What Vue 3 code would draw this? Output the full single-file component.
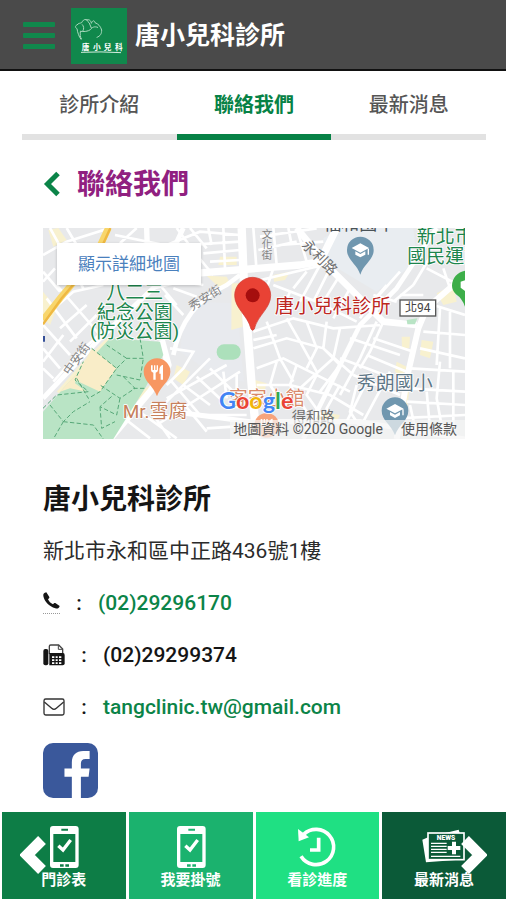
<script setup>
import { ref } from 'vue'

const tabs = ['診所介紹', '聯絡我們', '最新消息']
const activeTab = ref(1)

const shortcuts = [
  { label: '門診表', icon: 'phone', tone: 'tone-forest' },
  { label: '我要掛號', icon: 'phone', tone: 'tone-green' },
  { label: '看診進度', icon: 'clock', tone: 'tone-mint' },
  { label: '最新消息', icon: 'news', tone: 'tone-deep' },
]
</script>

<template>
  <div class="page">
    <header class="topbar">
      <button class="menu" type="button" aria-label="選單">
        <span></span><span></span><span></span>
      </button>
      <svg class="logo" viewBox="0 0 168 168" aria-hidden="true">
        <rect width="168" height="168" fill="#10884c" />
        <g fill="none" stroke="#a9d8bd" stroke-width="3" stroke-linecap="round" stroke-linejoin="round">
          <path d="M30 94C24 86 20 75 18 62C12 59 12 53 18 51C22 45 28 46 32 44C35 38 39 33 46 35C51 37 51 44 56 47" />
          <path d="M46 36C54 33 60 37 61 46C64 38 70 35 72 44C82 48 88 54 92 66C92 78 88 84 78 88" />
          <path d="M28 70C38 72 52 70 58 65C63 58 70 54 80 58M34 50C38 54 40 62 36 68M28 72C28 80 26 86 31 92M56 48L61 60" />
        </g>
        <path d="M30 133Q90 130 150 134" fill="none" stroke="#d5eddf" stroke-width="3" />
        <text x="32" y="125" class="logo-text">唐</text>
        <text x="66" y="125" class="logo-text">小</text>
        <text x="98" y="125" class="logo-text">兒</text>
        <text x="132" y="125" class="logo-text">科</text>
      </svg>
      <span class="brand">唐小兒科診所</span>
    </header>

    <nav class="tabs">
      <button
        v-for="(tab, i) in tabs"
        :key="tab"
        type="button"
        class="tab"
        :class="{ active: i === activeTab }"
        @click="activeTab = i"
      >{{ tab }}</button>
    </nav>

    <main class="content">
      <div class="title-row">
        <button class="back" type="button" aria-label="返回">
          <svg viewBox="0 0 17 26"><path d="M14.500 2.500L4 13L14.500 23.500" fill="none" stroke="#0b8448" stroke-width="5" /></svg>
        </button>
        <h1>聯絡我們</h1>
      </div>

      <div class="map">
        <svg class="map-art" viewBox="9 9 1266 633" role="img" aria-label="地圖">
          <rect x="9" y="9" width="1266" height="633" fill="#e8e9eb" />
          <!-- campus grounds -->
          <path d="M425 340Q440 235 505 232L590 235L612 470L530 455L420 380Z" fill="#e8eaee" />
          <path d="M850 40L900 9L1120 9L1130 110L1010 200L860 110Z" fill="#e9edf1" />
          <!-- commercial blocks -->
          <g fill="#f8f1cf">
            <path d="M575 175L608 175L608 305L574 315Z" />
            <path d="M540 95L590 95L590 120L535 120ZM700 150L750 140L735 165L702 170ZM500 152L560 155L572 180L535 185Z" />
            <path d="M1145 345L1180 350L1170 400L1140 390ZM1085 335L1110 335L1108 370L1086 370ZM1070 410L1100 425L1085 460L1065 440ZM1085 470L1110 480L1100 560L1085 545Z" />
            <path d="M9 200L50 250L30 300L9 280ZM410 420L450 440L430 480L400 460ZM300 500L345 470L290 560ZM645 465L680 475L670 510L648 500Z" />
            <path d="M840 560L900 570L880 610L830 590ZM1190 205L1240 180L1250 230L1210 240ZM25 15L55 9L80 45L40 65ZM50 500L120 420L200 340L230 360L80 520Z" />
          </g>
          <!-- minor streets -->
          <g fill="none" stroke="#fff" stroke-width="8">
            <path d="M30 9L130 190M80 9L110 60M9 90L80 50L210 9M240 55L290 9M225 30L420 70M9 170L45 130M50 180L180 330M20 220L110 340M9 300L90 390M9 370L60 430M9 430L40 460M30 260L100 200L190 180M60 310L140 240M90 350L170 270M120 380L200 310M9 410L70 330M40 470L120 380M9 140L60 200" />
            <path d="M410 9L470 90L520 150M450 9L500 70M380 60L480 20L600 30M440 60L600 50M490 85L600 75M510 110L600 105M505 9L515 60M550 9L555 130M360 180L410 240M400 190L470 215M375 210L430 270M340 190L420 170L490 180" />
            <path d="M640 9L650 140M660 35L830 10M655 75L770 50M700 9L710 120M745 9L755 60M770 9L800 110M720 60L850 50M640 170L850 120M680 190L700 130M760 190L800 140M840 120L780 230M900 150L850 230M930 190L880 280M700 180L830 230L950 290M750 200L720 270M870 130L820 230" />
            <path d="M640 320L760 280L880 310L1020 300M640 370L740 340L850 370L940 450M650 430L730 400L850 460L930 500M680 290L720 400L760 470M740 280L780 350L830 440M800 290L830 370L800 430M860 290L850 370L900 420M900 310L880 400L780 490M960 300L900 420L840 500M1010 290L960 400L900 510M650 480L750 480L870 510L970 570M710 410L690 480L730 540M770 420L750 480L800 560M830 450L800 510L850 580M900 480L860 550L880 620M950 480L930 560L970 620M640 345L710 330M930 340L1080 390M900 400L1060 460M1030 290L990 380L960 430" />
            <path d="M1000 210L1070 230M1040 180L980 250L960 280M1080 140L1000 230M1120 180L1060 230M1150 210L1080 210M1180 80L1120 180M1210 130L1230 190M1160 130L1275 190M1180 240L1275 270M1150 320L1275 330M1200 250L1190 420M1230 260L1230 430M1140 370L1275 400M1110 430L1275 440M1100 490L1275 500M1200 410L1190 520L1210 630M1240 440L1240 630M1070 580L1275 570M1100 530L1275 540M980 390L1100 440M940 450L1080 510M1000 340L1120 380M980 470L920 590M1050 440L970 590M1110 540L1130 630M1160 500L1170 610" />
            <path d="M390 370L460 380L430 430L380 480M350 560L510 400M380 520L560 420M350 600L600 440M430 480L510 540M470 455L550 530M510 430L590 510M395 470L480 570M340 570L390 640M430 535L500 620M480 570L620 570M500 610L650 600M550 440L560 520M590 450L590 550M240 570L330 640M270 540L410 640M220 620L260 560" />
          </g>
          <!-- main streets -->
          <g fill="none" stroke="#fff" stroke-linejoin="round">
            <path d="M605 9L612 180L635 480L650 642" stroke-width="25" />
            <path d="M340 155L530 140L780 120L840 110L890 9" stroke-width="22" />
            <path d="M770 9L870 130L1030 290L1130 300" stroke-width="20" />
            <path d="M1190 9L1070 190L960 300L790 642" stroke-width="14" />
            <path d="M1275 150L1160 250L1135 310L1105 440L1070 642" stroke-width="18" />
            <path d="M9 520L180 340L350 180L430 9" stroke-width="15" />
            <path d="M365 345L385 420L330 500L210 642" stroke-width="20" />
            <path d="M320 9L325 170" stroke-width="16" />
            <path d="M400 390Q430 240 560 180L600 150" stroke-width="14" />
            <path d="M400 560L630 590L960 590L1275 642" stroke-width="15" />
          </g>
          <path d="M205 9L165 95L60 220L9 285" fill="none" stroke="#f8d66c" stroke-width="20" />
          <path d="M211 9L172 95L65 220L9 298" fill="none" stroke="#efb842" stroke-width="7" />
          <!-- park -->
          <path d="M9 560L70 490L210 340L360 350L370 390L315 490L220 642L9 642Z" fill="#b9e4c5" />
          <path d="M155 370L230 430L180 500L105 465Z" fill="#f9edc8" />
          <path d="M60 500L115 440L105 475L140 500L90 490Z" fill="#f9edc8" />
          <g fill="none" stroke="#56a878" stroke-width="3" stroke-dasharray="13 7">
            <path d="M9 550L50 510L145 500L105 465L130 410M155 370L230 430L180 500L145 520L110 460M230 430L260 400L310 400L300 340M260 400L200 360M230 450L300 465L310 400M250 455L285 490L240 520L180 480M240 520L230 570L180 545L220 510M30 540L70 590L100 560L150 530M70 590L40 642M70 590L160 600L190 642M180 545L185 610L225 590M280 490L315 490" />
          </g>
          <rect x="530" y="358" width="72" height="46" rx="22" fill="#ace0bb" />
          <path d="M1100 285L1132 280L1125 298L1102 298Z" fill="#b9e4c5" />
          <path d="M9 333H15V350H9Z" fill="#344f98" />

          <!-- street and place names -->
          <g class="map-street">
            <text transform="translate(456 258) rotate(-32)">秀安街</text>
            <text transform="translate(88 452) rotate(-54)">中安街</text>
            <text x="678" y="10" class="vertical">文化街</text>
            <text transform="translate(783 62) rotate(45)" class="street-big">永利路</text>
            <text x="755" y="590" class="street-big">得和路</text>
            <text x="850" y="16" class="school-cut">福和國中</text>
          </g>
          <g class="map-place map-outline">
            <g fill="#1c854d">
              <text x="284" y="222" text-anchor="middle">八二三</text>
              <text x="284" y="281" text-anchor="middle">紀念公園</text>
              <text x="284" y="338" text-anchor="middle">(防災公園)</text>
              <text x="1130" y="54">新北市</text>
              <text x="1102" y="115">國民運動</text>
            </g>
            <text x="248" y="580" fill="#c6805c">Mr.雪腐</text>
            <text x="566" y="539" fill="#d98968">客家小館</text>
            <text x="950" y="495" fill="#5f7888">秀朗國小</text>
            <text x="704" y="263" class="clinic" fill="#bd271f">唐小兒科診所</text>
          </g>

          <!-- route badge -->
          <rect x="1080" y="225" width="107" height="48" fill="#fff" stroke="#555" stroke-width="4" />
          <text x="1133" y="262" class="route" text-anchor="middle">北94</text>

          <!-- school pins -->
          <g v-for="pin in [[961, 75], [1065, 557]]" :key="pin[0]" :transform="`translate(${pin[0]} ${pin[1]})`">
            <path d="M-40 0A40 40 0 1 1 40 0C40 30 10 42 0 74C-10 42 -40 30 -40 0Z" fill="#7097af" />
            <path d="M-26 -6L0 -20L26 -6L0 8ZM-15 4L0 12L15 4V14L0 22L-15 14ZM22 -4H26V14H22Z" fill="#fff" />
          </g>
          <!-- restaurant pins -->
          <g transform="translate(351 440)">
            <path d="M-40 0A40 40 0 1 1 40 0C40 30 10 42 0 74C-10 42 -40 30 -40 0Z" fill="#f79762" />
            <path d="M-18 -19V-5Q-18 2 -11 3V24H-4V3Q3 2 3 -5V-19H-1V-5H-5V-19H-9V-5H-13V-19ZM16 -20Q7 -16 7 -4V6H11V24H18V-20Z" fill="#fff" />
          </g>
          <g transform="translate(680 601)">
            <circle r="37" fill="#f7a47c" />
            <path d="M-18 -19V-5Q-18 2 -11 3V24H-4V3Q3 2 3 -5V-19H-1V-5H-5V-19H-9V-5H-13V-19ZM16 -20Q7 -16 7 -4V6H11V24H18V-20Z" fill="#fff" />
          </g>
          <!-- sports centre pin -->
          <path d="M1236 182A46 46 0 0 1 1275 137V245Q1266 220 1248 208Q1236 196 1236 182Z" fill="#3dae49" />
          <path d="M1262 170L1275 166V198L1262 188Z" fill="#fff" />
          <!-- clinic pin -->
          <path d="M584 211A54 54 0 0 1 692 211C692 251 653 270 643 312Q638 320 633 312C623 270 584 251 584 211Z" fill="#e94235" stroke="#cf3930" stroke-width="2" />
          <circle cx="638" cy="211" r="21" fill="#a50e0e" />

          <rect x="570" y="585" width="705" height="57" fill="#f5f5f5" opacity=".7" />
          <text x="537" y="553" class="google map-outline"><tspan fill="#4285f4">G</tspan><tspan fill="#ea4335">o</tspan><tspan fill="#f2b50b">o</tspan><tspan fill="#4285f4">g</tspan><tspan fill="#34a853">l</tspan><tspan fill="#ea4335">e</tspan></text>
          <text x="580" y="626" class="credit">地圖資料 ©2020 Google</text>
          <a href="#terms"><text x="1083" y="626" class="credit">使用條款</text></a>
        </svg>
        <a class="map-detail" href="#map">顯示詳細地圖</a>
      </div>

      <h2>唐小兒科診所</h2>
      <p class="address">新北市永和區中正路436號1樓</p>

      <ul class="contacts">
        <li>
          <span class="mark mark-phone">
            <svg viewBox="0 0 51 51" aria-label="電話"><path d="M10 1L19 15C20 18 17 20 15 22C18 29 23 34 30 37C33 34 35 32 38 34L50 42C48 49 43 51 37 49C18 43 4 29 1 12C0 6 3 2 10 1Z" fill="#151515" /></svg>
          </span>
          <span class="colon">:</span>
          <a href="tel:0229296170">(02)29296170</a>
        </li>
        <li>
          <span class="mark mark-wide">
            <svg viewBox="0 0 66 66" aria-label="傳真">
              <rect x="1" y="15" width="15" height="49" rx="6" fill="#151515" />
              <path d="M19 30V7Q19 3 23 3H47L59 15V30" fill="#fff" stroke="#444" stroke-width="4" />
              <path d="M46 4V16H58" fill="none" stroke="#444" stroke-width="3" />
              <path d="M19 27H60Q65 27 65 33V58Q65 64 59 64H19Z" fill="#151515" />
              <path d="M27 37H34V42H27ZM38 37H44V42H38ZM48 37H55V42H48ZM27 46H34V51H27ZM38 46H44V51H38ZM48 46H55V51H48ZM27 55H34V60H27ZM38 55H44V60H38ZM48 55H55V60H48Z" fill="#fff" />
            </svg>
          </span>
          <span class="colon">:</span>
          <span>(02)29299374</span>
        </li>
        <li>
          <span class="mark mark-wide">
            <svg viewBox="0 0 66 66" aria-label="電子郵件">
              <rect x="3" y="9" width="60" height="48" rx="5" fill="none" stroke="#333" stroke-width="4" />
              <path d="M4 18L26 37Q33 43 40 37L62 18" fill="none" stroke="#333" stroke-width="4" />
            </svg>
          </span>
          <span class="colon">:</span>
          <a href="mailto:tangclinic.tw@gmail.com">tangclinic.tw@gmail.com</a>
        </li>
      </ul>

      <a class="facebook" href="#facebook" aria-label="Facebook">
        <svg viewBox="0 0 164 164">
          <rect width="164" height="164" rx="30" fill="#3a589b" />
          <path d="M86 164V101H64V76H86V58C86 36 99 24 120 24H139V48H127C117 48 113 53 113 62V76H139L136 101H113V164Z" fill="#fff" />
        </svg>
      </a>
    </main>

    <nav class="dock">
      <a v-for="item in shortcuts" :key="item.label" href="#" class="tile" :class="item.tone">
        <svg v-if="item.icon === 'phone'" class="tile-icon" viewBox="0 0 132 132" aria-hidden="true">
          <path d="M33 3H101Q110 3 110 12V120Q110 129 101 129H33Q24 129 24 120V12Q24 3 33 3ZM34 27V111H100V27ZM58 11V17H78V11ZM54 118V125H65V118ZM70 118V125H81V118Z" fill="#fff" fill-rule="evenodd" />
          <path d="M49 62L63 75L86 45" fill="none" stroke="#fff" stroke-width="10" />
        </svg>
        <svg v-else-if="item.icon === 'clock'" class="tile-icon" viewBox="0 0 132 132" aria-hidden="true">
          <path d="M26 28A53 53 0 1 1 18 94" fill="none" stroke="#fff" stroke-width="11" />
          <path d="M9 12L42 37L11 49Z" fill="#fff" />
          <path d="M71 38V75H45" fill="none" stroke="#fff" stroke-width="11" />
        </svg>
        <svg v-else class="tile-icon" viewBox="0 0 132 132" aria-hidden="true">
          <path d="M1 44L20 36V104H111L12 112ZM70 24L110 14L114 26Z" fill="#fff" />
          <rect x="18" y="24" width="108" height="80" fill="#0b5a38" stroke="#fff" stroke-width="5" />
          <path d="M27 55H74M27 64H74M27 73H74M27 82H74M27 94H115" stroke="#fff" stroke-width="4" />
          <path d="M96 50V88M77 69H115" stroke="#fff" stroke-width="12" />
          <text x="72" y="45" text-anchor="middle" class="news-text">NEWS</text>
        </svg>
        <span>{{ item.label }}</span>
      </a>
      <button class="arrow arrow-left" type="button" aria-label="上一頁">
        <svg viewBox="0 0 26 38"><path d="M22 4L7 19L22 34" fill="none" stroke="#fff" stroke-width="11" /></svg>
      </button>
      <button class="arrow arrow-right" type="button" aria-label="下一頁">
        <svg viewBox="0 0 26 38"><path d="M4 4L19 19L4 34" fill="none" stroke="#fff" stroke-width="11" /></svg>
      </button>
    </nav>
  </div>
</template>

<style>
body {
  background: #fff;
}
</style>

<style scoped>
.page {
  box-sizing: border-box;
  min-height: 100vh;
  display: flex;
  flex-direction: column;
  font-family: Roboto, "Noto Sans CJK TC", sans-serif;
  color: #151515;
}

button {
  padding: 0;
  border: 0;
  background: none;
  font: inherit;
  cursor: pointer;
}

a {
  color: #0b8448;
  text-decoration: none;
}

svg {
  display: block;
}

.topbar {
  display: flex;
  align-items: center;
  height: 67px;
  padding: 2px 23px 0;
  background: #4a4a4a;
  border-bottom: 2px solid #111;
}

.menu {
  display: flex;
  flex-direction: column;
  gap: 6px;
  width: 32px;
  margin-right: 16px;
}

.menu span {
  height: 5px;
  border-radius: 1px;
  background: #10884c;
}

.logo {
  width: 56px;
  height: 56px;
  margin-right: 8px;
}

.logo-text {
  font-family: "Noto Sans CJK TC", sans-serif;
  font-size: 23px;
  font-weight: 700;
  fill: #fff;
}

.brand {
  font-size: 25px;
  line-height: 36px;
  font-weight: 700;
  color: #fff;
}

.tabs {
  display: grid;
  grid-template-columns: repeat(3, 1fr);
  padding: 0 20px 0 22px;
}

.tab {
  height: 69px;
  padding-top: 4px;
  border-bottom: 6px solid #e2e2e2;
  font-size: 20px;
  line-height: 28px;
  font-weight: 500;
  color: #555;
}

.tab.active {
  border-bottom-color: #078246;
  color: #078246;
  font-weight: 700;
}

.content {
  padding: 24px 41px 12px 43px;
}

.title-row {
  display: flex;
  align-items: center;
  gap: 16px;
  height: 40px;
  margin-bottom: 24px;
}

.back svg {
  width: 18px;
  height: 26px;
}

h1,
h2 {
  margin: 0;
  font-size: 28px;
  line-height: 40px;
  font-weight: 700;
}

h1 {
  padding-top: 2px;
  color: #902080;
}

.map {
  position: relative;
}

.map-art {
  width: 100%;
  height: auto;
}

.map-detail {
  position: absolute;
  left: 14px;
  top: 15px;
  padding: 7px 21px;
  background: #fff;
  box-shadow: 0 1px 3px rgba(0, 0, 0, 0.2);
  font-size: 17px;
  line-height: 28px;
  color: #4a80bd;
}

.map-street {
  font-size: 36px;
  fill: #858585;
}

.map-street .street-big {
  font-size: 43px;
  fill: #707070;
}

.map-street .school-cut {
  font-size: 54px;
  fill: #4a5358;
}

.map-street .vertical {
  writing-mode: vertical-rl;
  font-size: 32px;
}

.map-place {
  font-size: 57px;
}

.map-outline {
  paint-order: stroke;
  stroke: #fff;
  stroke-width: 5px;
  stroke-linejoin: round;
}

.clinic {
  font-size: 58px;
}

.route {
  font-size: 36px;
  fill: #444;
}

.google {
  font-family: Lato, sans-serif;
  font-size: 70px;
  font-weight: 700;
}

.credit {
  font-size: 42px;
  fill: #555;
}

h2 {
  margin-top: 41px;
}

.address {
  margin: 15px 0 20px;
  font-size: 21px;
  line-height: 32px;
  color: #2b2b2b;
}

.contacts {
  display: flex;
  flex-direction: column;
  gap: 20px;
  margin: 20px 0;
  padding: 0;
  list-style: none;
  font-size: 21px;
  line-height: 32px;
  font-weight: 500;
}

.contacts li {
  display: flex;
  align-items: center;
}

.mark-phone {
  padding-bottom: 4px;
  border-bottom: 1px dotted #999;
}

.mark-phone svg {
  width: 17px;
  height: 17px;
}

.mark-wide svg {
  width: 22px;
  height: 22px;
}

.colon {
  width: 38px;
  text-align: center;
}

.facebook {
  display: block;
  width: 55px;
}

.dock {
  position: sticky;
  bottom: 0;
  display: grid;
  grid-template-columns: repeat(4, 1fr);
  gap: 3px;
  margin-top: auto;
  padding: 0 0 1px 2px;
  background: #fff;
}

.tile {
  display: flex;
  flex-direction: column;
  align-items: center;
  height: 74px;
  padding-top: 13px;
  color: #fff;
  font-size: 15px;
  line-height: 22px;
  font-weight: 700;
}

.tile-icon {
  width: 44px;
  height: 44px;
}

.tone-forest {
  background: #0d7d46;
}

.tone-green {
  background: #1bb26e;
}

.tone-mint {
  background: #1fe083;
}

.tone-deep {
  background: #0b5a38;
}

.news-text {
  font-size: 20px;
  font-weight: 900;
  fill: #fff;
}

.arrow {
  position: absolute;
  top: 24px;
}

.arrow svg {
  width: 26px;
  height: 38px;
}

.arrow-left {
  left: 20px;
}

.arrow-right {
  right: 19px;
}
</style>
